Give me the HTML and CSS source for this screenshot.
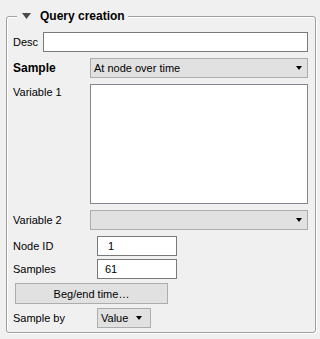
FILE: index.html
```html
<!DOCTYPE html>
<html>
<head>
<meta charset="utf-8">
<link rel="stylesheet" href="styles.css">
</head>
<body>
<div class="group">
  <div class="title">
    <svg class="tri" width="10" height="6" viewBox="0 0 10 6"><polygon points="0,0 9,0 4.5,6" fill="#4a4a4a"/></svg>
    <span class="title-text">Query creation</span>
  </div>
  <div class="row row-desc">
    <span class="lbl lbl-desc">Desc</span>
    <div class="input input-desc"></div>
  </div>
  <div class="row row-sample">
    <span class="lbl lbl-wide bold">Sample</span>
    <div class="combo combo-wide"><span>At node over time</span><span class="arrow"></span></div>
  </div>
  <div class="row row-var1">
    <span class="lbl lbl-wide lbl-top">Variable 1</span>
    <div class="list"></div>
  </div>
  <div class="row row-var2">
    <span class="lbl lbl-wide">Variable 2</span>
    <div class="combo combo-wide combo-empty"><span></span><span class="arrow"></span></div>
  </div>
  <div class="row row-node">
    <span class="lbl lbl-num">Node ID</span>
    <div class="input input-num"><span class="val val-1">1</span></div>
  </div>
  <div class="row row-samples">
    <span class="lbl lbl-num">Samples</span>
    <div class="input input-num"><span class="val">61</span></div>
  </div>
  <div class="row row-btn">
    <div class="button">Beg/end time…</div>
  </div>
  <div class="row row-by">
    <span class="lbl lbl-num">Sample by</span>
    <div class="combo combo-small"><span>Value</span><span class="arrow"></span></div>
  </div>
</div>
</body>
</html>
```
FILE: styles.css
```css
html, body {
  margin: 0;
  padding: 0;
  background: #f0f0f0;
}
body {
  width: 320px;
  height: 339px;
  font-family: "Liberation Sans", Arial, sans-serif;
  font-size: 11px;
  color: #000;
}
.group {
  position: relative;
  box-sizing: border-box;
  margin: 16px 0 0 6px;
  width: 310px;
  height: 317px;
  border: 1px solid #a0a0a0;
  border-radius: 3px;
  box-shadow: inset 1px 1px 0 #fff, 1px 1px 0 #fff;
  padding: 15px 7px 0 6px;
}
.title {
  position: absolute;
  top: -9px;
  left: 10px;
  display: flex;
  align-items: center;
  background: #f0f0f0;
  padding: 0 3px 0 5px;
  height: 16px;
}
.tri {
  display: block;
  margin-right: 8px;
  margin-top: -1px;
}
.title-text {
  font-weight: bold;
  font-size: 12px;
}
.row {
  display: flex;
  align-items: center;
}
.lbl {
  flex: none;
}
.bold {
  font-weight: bold;
  font-size: 12px;
}
.lbl-desc { width: 30px; }
.lbl-wide { width: 77px; }
.lbl-num { width: 84px; }
.lbl-top { align-self: flex-start; margin-top: 2px; }
.input {
  box-sizing: border-box;
  height: 20px;
  background: #fff;
  border: 1px solid #7a7a7a;
  display: flex;
  align-items: center;
}
.input-desc { width: 265px; }
.input-num { width: 80px; }
.val { padding-left: 7px; }
.val-1 { padding-left: 10px; }
.combo {
  box-sizing: border-box;
  height: 20px;
  background: #e1e1e1;
  border: 1px solid #adadad;
  display: flex;
  align-items: center;
  justify-content: space-between;
  padding: 0 5px 0 3px;
}
.combo-wide { width: 218px; }
.combo-small { width: 54px; padding-right: 8px; }
.arrow {
  width: 0;
  height: 0;
  border-left: 3.5px solid transparent;
  border-right: 3.5px solid transparent;
  border-top: 4px solid #000;
}
.list {
  box-sizing: border-box;
  width: 218px;
  height: 120px;
  background: #fff;
  border: 1px solid #828790;
}
.button {
  box-sizing: border-box;
  width: 153px;
  height: 21px;
  margin-left: 2px;
  background: #e1e1e1;
  border: 1px solid #adadad;
  display: flex;
  align-items: center;
  justify-content: center;
}
.row-sample { margin-top: 6px; }
.row-var1 { margin-top: 6px; }
.row-var2 { margin-top: 6px; }
.row-node { margin-top: 6px; }
.row-samples { margin-top: 3px; }
.row-btn { margin-top: 4px; }
.row-by { margin-top: 4px; }
```
